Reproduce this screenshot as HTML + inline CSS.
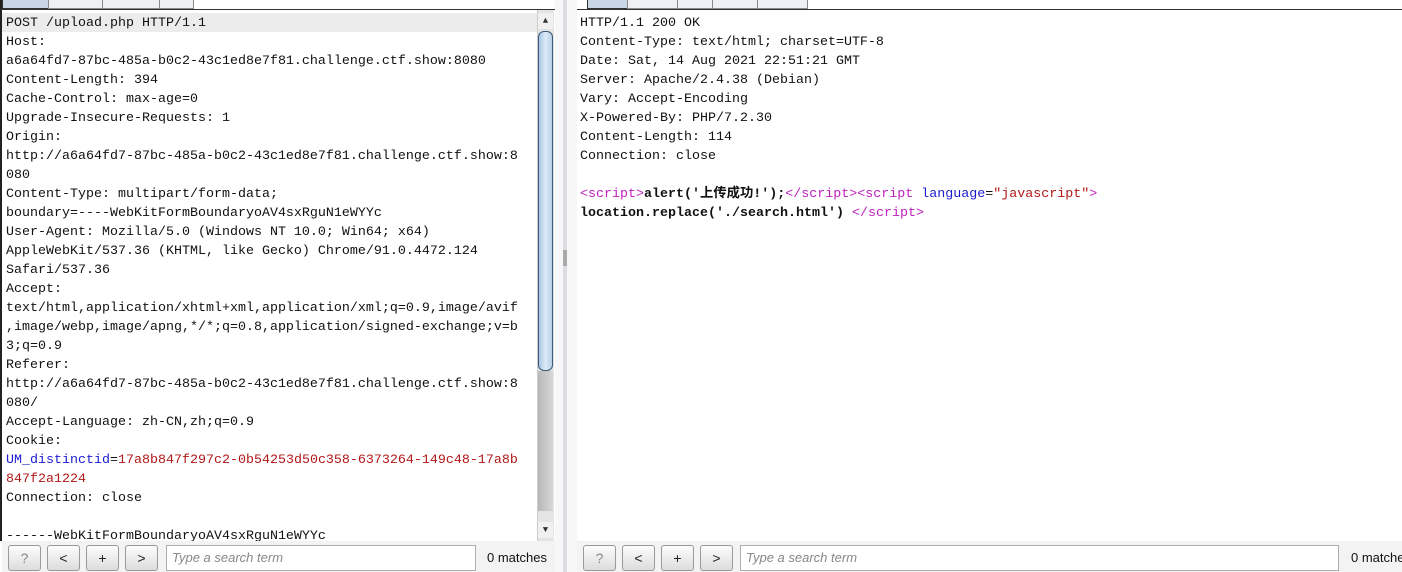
<!DOCTYPE html>
<html><head><style>
*{margin:0;padding:0;box-sizing:border-box}
body{width:1402px;height:572px;background:#fff;position:relative;overflow:hidden;font-family:"Liberation Mono","Noto Sans CJK SC",monospace}
.tab{position:absolute;top:0;height:9px;border:1px solid #8a8a8a;border-top:none;background:#eef0f4}
.tab.sel{background:#c8d6e6;border-color:#333}
.txt{position:absolute;font-size:13.33px;line-height:19px;color:#111;white-space:pre}
.hl{background:#ececec}
.b{color:#1a1ad0}.r{color:#b01818}.p{color:#c020c0}
.bar{position:absolute;top:541px;height:31px;background:#f3f3f3}
.btn{position:absolute;top:545px;width:33px;height:26px;border:1px solid #9a9a9a;border-radius:3px;background:linear-gradient(#fdfdfd,#dcdcdc);font-family:"Liberation Sans",sans-serif;font-size:14px;text-align:center;line-height:24px;color:#222}
.inp{position:absolute;top:545px;height:26px;border:1px solid #adadad;background:#fff;font-family:"Liberation Sans",sans-serif;font-style:italic;font-size:13px;color:#888;padding-left:5px;line-height:24px}
.m{position:absolute;top:550px;font-family:"Liberation Sans",sans-serif;font-size:13px;color:#111;white-space:nowrap}
</style></head><body>
<div style="position:absolute;left:0;top:0;width:2px;height:541px;background:#222"></div>
<div style="position:absolute;left:0;top:9px;width:556px;height:1px;background:#333"></div>
<div class="tab sel" style="left:2px;width:47px"></div>
<div class="tab" style="left:48px;width:55px"></div>
<div class="tab" style="left:102px;width:58px"></div>
<div class="tab" style="left:159px;width:35px"></div>
<div class="hl" style="position:absolute;left:2px;top:13px;width:535px;height:19px"></div>
<div class="txt" style="left:6px;top:14px">POST /upload.php HTTP/1.1
Host:
a6a64fd7-87bc-485a-b0c2-43c1ed8e7f81.challenge.ctf.show:8080
Content-Length: 394
Cache-Control: max-age=0
Upgrade-Insecure-Requests: 1
Origin:
http://a6a64fd7-87bc-485a-b0c2-43c1ed8e7f81.challenge.ctf.show:8
080
Content-Type: multipart/form-data;
boundary=----WebKitFormBoundaryoAV4sxRguN1eWYYc
User-Agent: Mozilla/5.0 (Windows NT 10.0; Win64; x64)
AppleWebKit/537.36 (KHTML, like Gecko) Chrome/91.0.4472.124
Safari/537.36
Accept:
text/html,application/xhtml+xml,application/xml;q=0.9,image/avif
,image/webp,image/apng,*/*;q=0.8,application/signed-exchange;v=b
3;q=0.9
Referer:
http://a6a64fd7-87bc-485a-b0c2-43c1ed8e7f81.challenge.ctf.show:8
080/
Accept-Language: zh-CN,zh;q=0.9
Cookie:
<span class="b">UM_distinctid</span>=<span class="r">17a8b847f297c2-0b54253d50c358-6373264-149c48-17a8b
847f2a1224</span>
Connection: close

------WebKitFormBoundaryoAV4sxRguN1eWYYc</div>
<div style="position:absolute;left:537px;top:10px;width:17px;height:531px;background:#e4e4e4;border-left:1px solid #ccc"></div>
<div style="position:absolute;left:538px;top:13px;width:15px;height:16px;background:#f0f0f0;font-size:9px;text-align:center;line-height:16px;color:#333">▲</div>
<div style="position:absolute;left:538px;top:31px;width:15px;height:340px;border:1px solid #3b5a78;border-radius:6px;background:linear-gradient(90deg,#a9c6e4,#dceaf7 50%,#b7cfe8)"></div>
<div style="position:absolute;left:538px;top:371px;width:15px;height:140px;background:linear-gradient(90deg,#b8b8b8,#d8d8d8)"></div>
<div style="position:absolute;left:538px;top:522px;width:15px;height:16px;background:#f0f0f0;font-size:9px;text-align:center;line-height:16px;color:#333">▼</div>
<div style="position:absolute;left:555px;top:0;width:22px;height:572px;background:#f7f7f7"></div>
<div style="position:absolute;left:563px;top:0;width:4px;height:572px;background:#dcdce2"></div>
<div style="position:absolute;left:563px;top:250px;width:4px;height:16px;background:#aaa"></div>
<div style="position:absolute;left:577px;top:9px;width:825px;height:1px;background:#333"></div>
<div class="tab sel" style="left:587px;width:41px"></div>
<div class="tab" style="left:627px;width:51px"></div>
<div class="tab" style="left:677px;width:36px"></div>
<div class="tab" style="left:712px;width:46px"></div>
<div class="tab" style="left:757px;width:51px"></div>
<div class="txt" style="left:580px;top:14px">HTTP/1.1 200 OK
Content-Type: text/html; charset=UTF-8
Date: Sat, 14 Aug 2021 22:51:21 GMT
Server: Apache/2.4.38 (Debian)
Vary: Accept-Encoding
X-Powered-By: PHP/7.2.30
Content-Length: 114
Connection: close

<span class="p">&lt;script&gt;</span><b>alert('上传成功!');</b><span class="p">&lt;/script&gt;&lt;script</span> <span class="b">language</span>=<span class="r">"javascript"</span><span class="p">&gt;</span>
<b>location.replace('./search.html')</b> <span class="p">&lt;/script&gt;</span></div>
<div class="bar" style="left:2px;width:553px"></div>
<div class="bar" style="left:577px;width:825px"></div>
<div class="btn" style="left:8px;color:#888">?</div>
<div class="btn" style="left:47px">&lt;</div>
<div class="btn" style="left:86px">+</div>
<div class="btn" style="left:125px">&gt;</div>
<div class="inp" style="left:166px;width:310px">Type a search term</div>
<div class="m" style="left:487px">0 matches</div>
<div class="btn" style="left:583px;color:#888">?</div>
<div class="btn" style="left:622px">&lt;</div>
<div class="btn" style="left:661px">+</div>
<div class="btn" style="left:700px">&gt;</div>
<div class="inp" style="left:740px;width:599px">Type a search term</div>
<div class="m" style="left:1351px">0 matches</div>
</body></html>
